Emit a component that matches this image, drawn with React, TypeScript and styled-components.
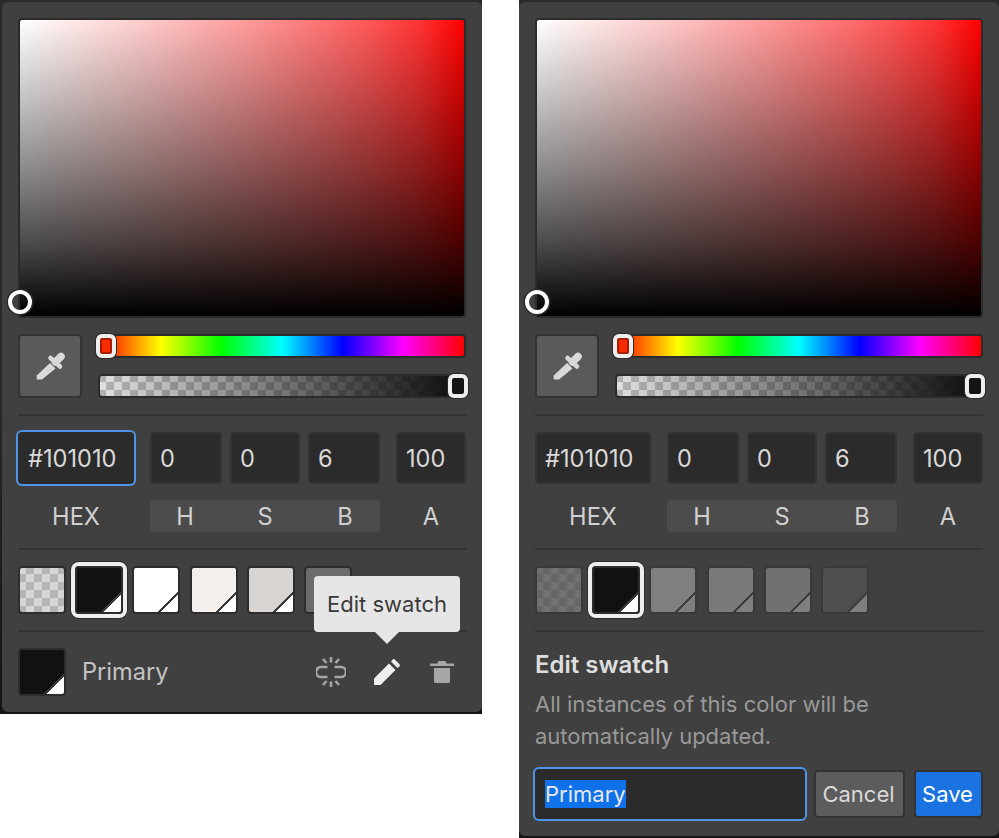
import React from "react";
import styled, { createGlobalStyle, css } from "styled-components";

const Global = createGlobalStyle`
  html, body { margin: 0; padding: 0; background: #fff; }
  body { font-family: Inter, "Noto Sans", sans-serif; }
  * { box-sizing: border-box; }
`;

const Page = styled.div`
  width: 999px;
  display: flex;
  align-items: flex-start;
  justify-content: space-between;
`;

const Panel = styled.div<{ $wide?: boolean }>`
  width: ${(p) => (p.$wide ? 482 : 480)}px;
  padding: 2px 0 2px ${(p) => (p.$wide ? 2 : 0)}px;
  background: linear-gradient(#2a2a2a, #2a2a2a 50%, #151515);
`;

const PanelBody = styled.div<{ $extra?: number }>`
  background: #404040;
  border-radius: 6px;
  padding: 16px 16px ${(p) => 16 + (p.$extra ?? 0)}px;
  color: #d9d9d9;
  font-size: 22px;
  line-height: 32px;
`;

const Canvas = styled.div`
  position: relative;
  height: 300px;
  border: 2px solid #2b2b2b;
  border-radius: 4px;
  background:
    linear-gradient(
      to top,
      rgba(0, 0, 0, 1),
      rgba(0, 0, 0, 0.7) 25%,
      rgba(0, 0, 0, 0.45) 50%,
      rgba(0, 0, 0, 0.22) 75%,
      rgba(0, 0, 0, 0)
    ),
    linear-gradient(
      to right,
      rgb(255, 255, 255),
      rgb(255, 236, 236) 10%,
      rgb(255, 218, 218) 20%,
      rgb(255, 199, 199) 30%,
      rgb(255, 178, 178) 40%,
      rgb(255, 157, 157) 50%,
      rgb(255, 134, 134) 60%,
      rgb(255, 110, 110) 70%,
      rgb(255, 83, 83) 80%,
      rgb(255, 51, 51) 90%,
      rgb(255, 0, 0)
    );
`;

const Marker = styled.div`
  position: absolute;
  left: -12px;
  bottom: 2px;
  width: 24px;
  height: 24px;
  border-radius: 50%;
  border: 4px solid #fff;
  box-shadow: 0 0 0 1.5px #2b2b2b;
`;

const Controls = styled.div`
  display: flex;
  gap: 16px;
  margin-top: 16px;
`;

const PickerButton = styled.div`
  width: 64px;
  height: 64px;
  flex: none;
  background: #5a5a5a;
  border: 2px solid #333;
  border-radius: 4px;
  display: flex;
  align-items: center;
  justify-content: center;
`;

const Sliders = styled.div`
  flex: 1;
  display: flex;
  flex-direction: column;
  gap: 16px;
`;

const Track = styled.div`
  position: relative;
  height: 24px;
  border: 2px solid #2b2b2b;
  border-radius: 4px;
`;

const HueTrack = styled(Track)`
  background: linear-gradient(to right, #f00, #ff0 16.67%, #0f0 33.33%, #0ff 50%, #00f 66.67%, #f0f 83.33%, #f00);
`;

const AlphaTrack = styled(Track)`
  background:
    linear-gradient(to right, rgba(16, 16, 16, 0), #101010 97%) border-box,
    conic-gradient(#e2e2e2 25%, #b4b4b4 0 50%, #e2e2e2 0 75%, #b4b4b4 0) 0 0 / 16px 16px border-box;
`;

const Thumb = styled.div<{ $fill: string; $edge: string; $end?: boolean }>`
  position: absolute;
  top: -2px;
  ${(p) => (p.$end ? "right: -4px;" : "left: -4px;")}
  width: 20px;
  height: 24px;
  background: ${(p) => p.$fill};
  border: 4px solid #eeeeee;
  border-radius: 6px;
  box-shadow: 0 0 0 1px #2b2b2b, inset 0 0 0 2px ${(p) => p.$edge};
`;

const Divider = styled.div`
  height: 2px;
  background: #333;
  margin: 16px 0;
`;

const Fields = styled.div`
  display: grid;
  grid-template-columns: 116px 230px 70px;
  column-gap: 16px;
  row-gap: 16px;
`;

const Group = styled.div`
  display: grid;
  grid-template-columns: 72px 70px 72px;
  column-gap: 8px;
`;

const ringStyle = css`
  border-color: #2b2b2b;
  box-shadow: 0 0 0 2px #4f94e6;
`;

const Field = styled.div<{ $focus?: boolean }>`
  height: 52px;
  background: #2b2b2b;
  border: 2px solid #333;
  border-radius: 4px;
  padding-left: 8px;
  font-size: 23.6px;
  line-height: 50px;
  color: #d9d9d9;
  ${(p) => p.$focus && ringStyle}
`;

const Label = styled.div`
  height: 32px;
  text-align: center;
  font-size: 23.6px;
  line-height: 34px;
  color: #d0d0d0;
`;

const LabelGroup = styled.div`
  height: 32px;
  display: grid;
  grid-template-columns: 70px 90px 70px;
  background: #4c4c4c;
  border-radius: 4px;
  text-align: center;
  font-size: 23.6px;
  line-height: 34px;
  color: #d0d0d0;
`;

const Swatches = styled.div`
  display: flex;
  gap: 9.2px;
`;

const Swatch = styled.div<{ $color: string; $selected?: boolean; $dim?: boolean; $checker?: boolean }>`
  width: 48px;
  height: 48px;
  flex: none;
  border: 2px solid #2d2d2d;
  border-radius: 4px;
  background: ${(p) =>
    p.$checker
      ? "conic-gradient(#b5b5b5 25%, #d6d6d6 0 50%, #b5b5b5 0 75%, #d6d6d6 0) 0 0 / 16px 16px border-box"
      : `linear-gradient(135deg, ${p.$color} 77%, #3a3a3a 77%, #3a3a3a 80%, #fff 80%)`};
  opacity: ${(p) => (p.$dim ? 0.33 : 1)};
  ${(p) => p.$selected && "box-shadow: 0 0 0 4px #eeeeee, 0 0 0 5px #2d2d2d;"}
`;

const Footer = styled.div`
  position: relative;
  height: 48px;
  display: flex;
  align-items: center;
`;

const SwatchName = styled.div`
  margin-left: 16px;
  flex: 1;
  font-size: 23.6px;
  color: #c4c4c4;
`;

const IconSlot = styled.div`
  width: 48px;
  margin-left: 7.5px;
  display: flex;
  justify-content: center;
  align-items: center;
`;

const Tooltip = styled.div`
  position: absolute;
  right: 6px;
  bottom: 64px;
  width: 146px;
  height: 56px;
  background: #e6e6e6;
  color: #3a3a3a;
  border-radius: 4px;
  text-align: center;
  line-height: 56px;
  &::after {
    content: "";
    position: absolute;
    left: 50%;
    top: 100%;
    margin-left: -12px;
    border: 12px solid transparent;
    border-bottom: 0;
    border-top-color: #e6e6e6;
  }
`;

const EditTitle = styled.div`
  height: 32px;
  font-size: 24px;
  line-height: 34px;
  font-weight: 600;
  color: #dedede;
`;

const EditText = styled.div`
  margin-top: 8px;
  color: #999;
`;

const EditRow = styled.div`
  display: flex;
  align-items: center;
  gap: 9px;
  margin-top: 17px;
`;

const NameField = styled.div`
  width: 270px;
  height: 50px;
  background: #2b2b2b;
  border-radius: 4px;
  box-shadow: 0 0 0 2px #4f94e6;
  padding-left: 10px;
  display: flex;
  align-items: center;
`;

const Selected = styled.span`
  background: #0f72ea;
  color: #e8e8e8;
  line-height: 28px;
`;

const Button = styled.div<{ $primary?: boolean; $width: number }>`
  width: ${(p) => p.$width}px;
  height: 48px;
  padding-right: 2px;
  border: 2px solid #333;
  border-radius: 4px;
  background: ${(p) => (p.$primary ? "#1a73e0" : "#5c5c5c")};
  color: ${(p) => (p.$primary ? "#fff" : "#d9d9d9")};
  display: flex;
  align-items: center;
  justify-content: center;
`;

const Dropper = () => (
  <svg width="32" height="32" viewBox="0 0 32 32" fill="#d9d9d9">
    <path d="M2.700 25.500 16 13 21.500 18.500 8 29.500H2.700z" />
    <path d="M16.500 8 26 16.500" stroke="#d9d9d9" strokeWidth="4.500" strokeLinecap="round" />
    <path d="M21.500 12 27 6.500" stroke="#d9d9d9" strokeWidth="7.500" strokeLinecap="round" />
  </svg>
);

const Unlink = () => (
  <svg width="30" height="30" viewBox="0 0 30 30" fill="none" stroke="#a6a6a6" strokeWidth="2.600">
    <path d="M11.500 10H5a5 5 0 0 0 0 10h6.500M18.500 10H25a5 5 0 0 1 0 10h-6.500" />
    <path d="M15 0v5.500M7 2l3.500 4M23 2l-3.500 4M15 24.500V30M7 28l3.500-4M23 28l-3.500-4" />
  </svg>
);

const Pencil = () => (
  <svg width="26" height="26" viewBox="0 0 26 26" fill="#eeeeee">
    <path d="M0 26v-6.500L15 4.500l6.500 6.500L6.500 26z" />
    <path d="M17 2.500 18.500.7a1.800 1.800 0 0 1 2.500 0l4.300 4.300a1.800 1.800 0 0 1 0 2.500L23.500 9z" />
  </svg>
);

const Trash = () => (
  <svg width="24" height="22" viewBox="0 0 24 22" fill="#a6a6a6">
    <path d="M0 2.500h7.500L8.500 0h7l1 2.500H24v2.500H0z" />
    <path d="M4 7h16v13.500a1.500 1.500 0 0 1-1.500 1.500h-13A1.500 1.500 0 0 1 4 20.500z" />
  </svg>
);

const Picker = ({ focus }: { focus?: boolean }) => (
  <>
    <Canvas>
      <Marker />
    </Canvas>
    <Controls>
      <PickerButton>
        <Dropper />
      </PickerButton>
      <Sliders>
        <HueTrack>
          <Thumb $fill="#f82a00" $edge="#a81c00" />
        </HueTrack>
        <AlphaTrack>
          <Thumb $fill="#141414" $edge="#141414" $end />
        </AlphaTrack>
      </Sliders>
    </Controls>
    <Divider />
    <Fields>
      <Field $focus={focus}>#101010</Field>
      <Group>
        <Field>0</Field>
        <Field>0</Field>
        <Field>6</Field>
      </Group>
      <Field>100</Field>
      <Label>HEX</Label>
      <LabelGroup>
        <span>H</span>
        <span>S</span>
        <span>B</span>
      </LabelGroup>
      <Label>A</Label>
    </Fields>
    <Divider />
  </>
);

const swatchColors = ["#ffffff", "#f2efec", "#d8d4d1", "#6b6b6b"];

const SwatchRow = ({ dim }: { dim?: boolean }) => (
  <Swatches>
    <Swatch $color="" $checker $dim={dim} />
    <Swatch $color="#111111" $selected />
    {swatchColors.map((c) => (
      <Swatch key={c} $color={c} $dim={dim} />
    ))}
  </Swatches>
);

export default function App() {
  return (
    <Page>
      <Global />
      <Panel $wide>
        <PanelBody>
          <Picker focus />
          <SwatchRow />
          <Divider />
          <Footer>
            <Swatch $color="#111111" />
            <SwatchName>Primary</SwatchName>
            <IconSlot>
              <Unlink />
            </IconSlot>
            <IconSlot>
              <Pencil />
            </IconSlot>
            <IconSlot>
              <Trash />
            </IconSlot>
            <Tooltip>Edit swatch</Tooltip>
          </Footer>
        </PanelBody>
      </Panel>
      <Panel>
        <PanelBody $extra={1}>
          <Picker />
          <SwatchRow dim />
          <Divider />
          <EditTitle>Edit swatch</EditTitle>
          <EditText>
            All instances of this color will be
            <br />
            automatically updated.
          </EditText>
          <EditRow>
            <NameField>
              <Selected>Primary</Selected>
            </NameField>
            <Button $width={91}>Cancel</Button>
            <Button $primary $width={69}>
              Save
            </Button>
          </EditRow>
        </PanelBody>
      </Panel>
    </Page>
  );
}
